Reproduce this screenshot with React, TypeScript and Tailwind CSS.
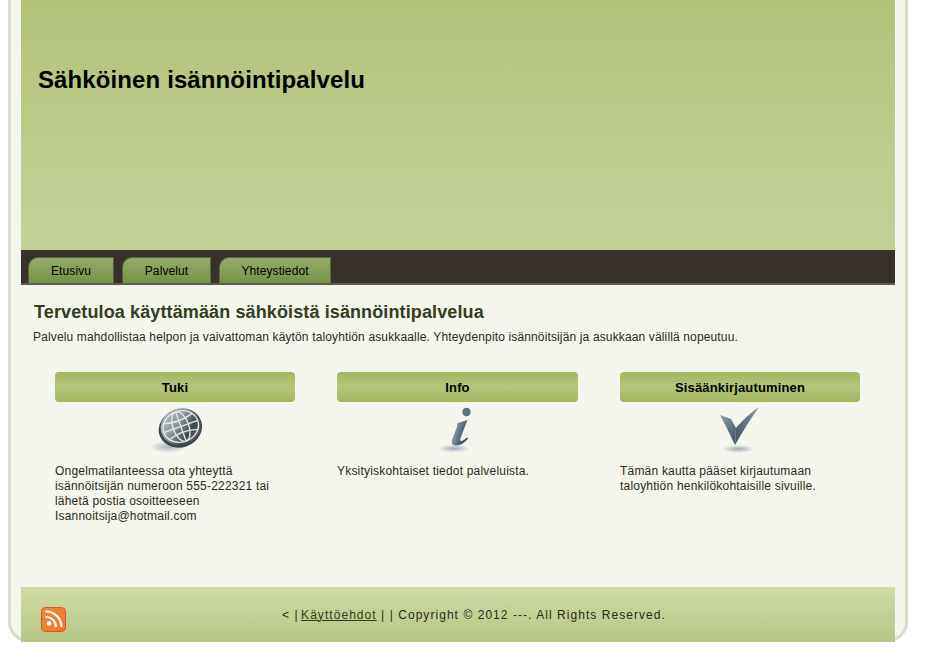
import React from "react";

const tabs = [
  { label: "Etusivu", width: "w-[86px]" },
  { label: "Palvelut", width: "w-[89px]" },
  { label: "Yhteystiedot", width: "w-[112px]" },
];

const GlobeIcon = () => (
  <svg width="54" height="50" viewBox="0 0 54 50">
    <defs>
      <linearGradient id="globeBody" x1="0.1" y1="0" x2="0.9" y2="0.9">
        <stop offset="0" stopColor="#b9c2c8" />
        <stop offset="0.45" stopColor="#8b959b" />
        <stop offset="0.75" stopColor="#3f484e" />
        <stop offset="1" stopColor="#59636a" />
      </linearGradient>
      <radialGradient id="globeShadow">
        <stop offset="0" stopColor="#8799ad" stopOpacity="0.7" />
        <stop offset="1" stopColor="#8799ad" stopOpacity="0" />
      </radialGradient>
    </defs>
    <ellipse cx="20" cy="41" rx="18" ry="6" fill="url(#globeShadow)" />
    <g transform="rotate(-20 33 21)">
      <ellipse cx="32" cy="22" rx="22" ry="19" fill="#3c464c" />
      <ellipse cx="33" cy="20.5" rx="20.5" ry="18" fill="url(#globeBody)" />
      <g fill="none" stroke="#e3e7e8" strokeWidth="1.4">
        <ellipse cx="33" cy="20.5" rx="18" ry="15.5" />
        <ellipse cx="33" cy="20.5" rx="8" ry="15.5" />
        <path d="M33 5V36M15 20.5H51M18 12Q33 17 48 12M18 29Q33 24 48 29" />
      </g>
    </g>
  </svg>
);

const InfoIcon = () => (
  <svg width="44" height="50" viewBox="0 0 44 50">
    <defs>
      <linearGradient id="infoBody" x1="0" y1="0" x2="1" y2="0.5">
        <stop offset="0" stopColor="#b3c0c9" />
        <stop offset="0.5" stopColor="#6a7f8f" />
        <stop offset="1" stopColor="#33475a" />
      </linearGradient>
      <radialGradient id="infoShadow">
        <stop offset="0" stopColor="#8799ad" stopOpacity="0.8" />
        <stop offset="1" stopColor="#8799ad" stopOpacity="0" />
      </radialGradient>
    </defs>
    <ellipse cx="18" cy="42.5" rx="16" ry="4" fill="url(#infoShadow)" />
    <circle cx="30.5" cy="6" r="4.2" fill="#5d717f" />
    <path
      d="M22 17L31.5 14L24.5 32Q23.5 35 25.5 35Q28 34.5 31 31.5L32 32.5Q27 39 20 39.5Q14.5 39.5 16 34L21 21Q21.5 19 21 18Z"
      fill="url(#infoBody)"
    />
  </svg>
);

const CheckIcon = () => (
  <svg width="54" height="50" viewBox="0 0 54 50">
    <defs>
      <linearGradient id="checkLeft" x1="0" y1="0" x2="0.7" y2="1">
        <stop offset="0" stopColor="#8c9eab" />
        <stop offset="1" stopColor="#475a68" />
      </linearGradient>
      <linearGradient id="checkRight" x1="0" y1="1" x2="1" y2="0">
        <stop offset="0" stopColor="#3f5260" />
        <stop offset="1" stopColor="#8497a5" />
      </linearGradient>
      <radialGradient id="checkShadow">
        <stop offset="0" stopColor="#8799ad" stopOpacity="0.8" />
        <stop offset="1" stopColor="#8799ad" stopOpacity="0" />
      </radialGradient>
    </defs>
    <ellipse cx="25" cy="43" rx="16" ry="4" fill="url(#checkShadow)" />
    <path d="M7 9L18 13L23 22L22 39Q15 24 7 9Z" fill="url(#checkLeft)" />
    <path d="M22 39L23 22Q34 9 46 1Q34 18 22 39Z" fill="url(#checkRight)" />
  </svg>
);

const RssIcon = () => (
  <svg width="26" height="26" viewBox="0 0 26 26">
    <defs>
      <linearGradient id="rssBody" x1="0" y1="0" x2="1" y2="1">
        <stop offset="0" stopColor="#f08a3c" />
        <stop offset="1" stopColor="#f37521" />
      </linearGradient>
    </defs>
    <rect x="0.5" y="0.5" width="24" height="24" rx="4" fill="url(#rssBody)" stroke="#d8532e" />
    <circle cx="8" cy="16.5" r="2.2" fill="#fff" />
    <g fill="none" stroke="#fff" strokeWidth="2.2">
      <path d="M4.5 10A10 10 0 0 1 15 20" />
      <path d="M4.5 4.5A15.5 15.5 0 0 1 20.5 20" />
    </g>
  </svg>
);

const columns = [
  {
    title: "Tuki",
    width: "w-[240px]",
    icon: <GlobeIcon />,
    text: "Ongelmatilanteessa ota yhteyttä isännöitsijän numeroon 555-222321 tai lähetä postia osoitteeseen Isannoitsija@hotmail.com",
  },
  { title: "Info", width: "w-[241px]", icon: <InfoIcon />, text: "Yksityiskohtaiset tiedot palveluista." },
  {
    title: "Sisäänkirjautuminen",
    width: "w-[240px]",
    icon: <CheckIcon />,
    text: "Tämän kautta pääset kirjautumaan taloyhtiön henkilökohtaisille sivuille.",
  },
];

export default function App() {
  return (
    <div className="min-h-[664px] bg-white font-['Liberation_Sans',Arial,sans-serif] text-[12px] text-[#2b2b20]">
      <div className="ml-[8px] w-[900px] rounded-b-[20px] border-x-[3px] border-b-[3px] border-[#d6dfc8] bg-[#f4f5ec] px-[10px]">
        <header className="h-[250px] bg-gradient-to-b from-[#b3c278] to-[#c4d198] px-[17px] pt-[66px]">
          <h1 className="text-[24px] leading-[28px] font-bold tracking-[0.11px] text-black">Sähköinen isännöintipalvelu</h1>
        </header>

        <nav className="flex h-[35px] gap-[8px] border-b-2 border-[#5c5a48] bg-[#38312b] pt-[7px] pl-[7px]">
          {tabs.map(tab => (
            <a
              key={tab.label}
              className={`${tab.width} flex h-[26px] items-center justify-center rounded-tl-[10px] border-x border-t border-[#57663d] bg-gradient-to-b from-[#94ad68] to-[#769149] tracking-[0.1px] text-black`}
            >
              {tab.label}
            </a>
          ))}
        </nav>

        <main className="h-[302px] pt-[16px]">
          <h2 className="ml-[13px] text-[18px] leading-[22px] font-bold tracking-[0.12px] text-[#333d22]">
            Tervetuloa käyttämään sähköistä isännöintipalvelua
          </h2>
          <p className="mt-[7px] ml-[12px] leading-[14px] tracking-[0.14px]">
            Palvelu mahdollistaa helpon ja vaivattoman käytön taloyhtiön asukkaalle. Yhteydenpito isännöitsijän ja asukkaan välillä nopeutuu.
          </p>

          <div className="mt-[28px] ml-[34px] flex gap-[42px]">
            {columns.map(col => (
              <section key={col.title} className={col.width}>
                <h3 className="flex h-[30px] items-center justify-center rounded-[4px] bg-gradient-to-b from-[#a3b65f] via-[#b5c67b] to-[#a3b65f] pt-[1px] text-[13px] font-bold tracking-[0.15px] text-black">
                  {col.title}
                </h3>
                <div className="mt-[4px] flex h-[50px] justify-center">{col.icon}</div>
                <p className="mt-[8px] w-[225px] leading-[15px] tracking-[0.2px]">{col.text}</p>
              </section>
            ))}
          </div>
        </main>

        <footer className="relative -mb-[3px] flex h-[55px] items-center justify-center bg-gradient-to-b from-[#d0dba6] to-[#b6c684] pl-[32px] tracking-[1.05px] text-[#2b2b20]">
          <span>
            {"< | "}
            <a className="-ml-[2px] text-[#333d22] underline">Käyttöehdot</a>
            {" | | Copyright © 2012 ---. All Rights Reserved."}
          </span>
          <span className="absolute top-[20px] left-[20px] flex">
            <RssIcon />
          </span>
        </footer>
      </div>
    </div>
  );
}
